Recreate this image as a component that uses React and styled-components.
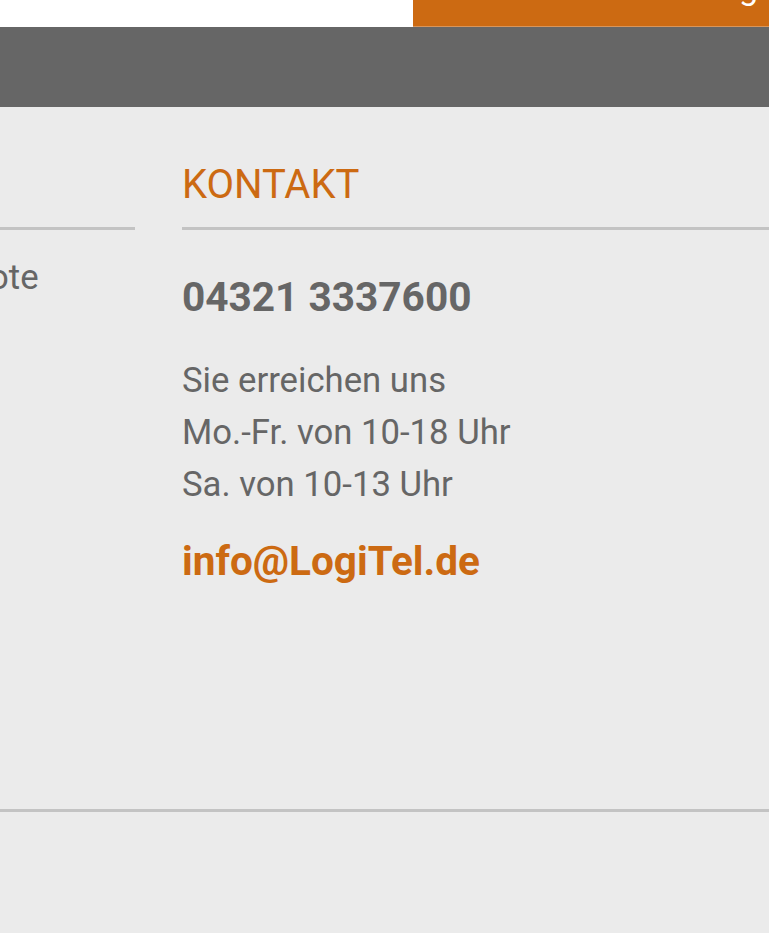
import React from 'react';
import styled, { createGlobalStyle } from 'styled-components';

const GlobalStyle = createGlobalStyle`
	html, body {
		margin: 0;
		padding: 0;
		background: #ebebeb;
		font-family: Roboto, "Liberation Sans", Arial, sans-serif;
		overflow: hidden;
	}
`;

const orange = '#cc6a12';
const grey = '#666666';

const TopBar = styled.div`
	height: 27px;
	background: #ffffff;
	display: flex;
	justify-content: flex-end;
`;

const CtaButton = styled.a`
	box-sizing: border-box;
	width: 356px;
	height: 27px;
	padding: 0 11px 22px 0;
	background: ${orange};
	border-bottom: 1px solid #d9955a;
	color: #ffffff;
	font-size: 34px;
	line-height: 34px;
	display: flex;
	justify-content: flex-end;
	align-items: flex-end;
	overflow: hidden;
	text-decoration: none;
`;

const NavBar = styled.nav`
	height: 80px;
	background: ${grey};
`;

const Main = styled.main`
	padding: 53px 0 224px;
	border-bottom: 3px solid #c3c3c3;
	overflow: hidden;
`;

const Columns = styled.div`
	display: grid;
	grid-template-columns: 378px 1fr;
	column-gap: 47px;
	margin-left: -243px;
`;

const Column = styled.section`
	display: flex;
	flex-direction: column;
`;

const Heading = styled.h2`
	margin: 0;
	padding-bottom: 17px;
	border-bottom: 3px solid #c3c3c3;
	font-size: 40px;
	line-height: 50px;
	font-weight: 400;
	color: ${orange};
	white-space: nowrap;
`;

const LinkList = styled.ul`
	list-style: none;
	margin: 21px 0 0;
	padding: 0;
	& > li {
		font-size: 34.7px;
		line-height: 52px;
		color: ${grey};
		white-space: nowrap;
	}
`;

const Phone = styled.div`
	margin-top: 42px;
	font-size: 40.6px;
	line-height: 50px;
	font-weight: 700;
	color: ${grey};
`;

const Hours = styled.p`
	margin: 32px 0 0;
	font-size: 34.7px;
	line-height: 52px;
	color: ${grey};
`;

const Mail = styled.a`
	margin-top: 27px;
	font-size: 40.5px;
	line-height: 48px;
	font-weight: 700;
	color: ${orange};
	text-decoration: none;
`;

const Footer = styled.footer`
	height: 130px;
`;

export default function App() {
	return (
		<>
			<GlobalStyle />
			<TopBar>
				<CtaButton href="#">Beratung</CtaButton>
			</TopBar>
			<NavBar />
			<Main>
				<Columns>
					<Column>
						<Heading>SERVICE</Heading>
						<LinkList>
							<li>Aktuelle Angebote</li>
						</LinkList>
					</Column>
					<Column>
						<Heading>KONTAKT</Heading>
						<Phone>04321 3337600</Phone>
						<Hours>
							Sie erreichen uns<br />
							Mo.-Fr. von 10-18 Uhr<br />
							Sa. von 10-13 Uhr
						</Hours>
						<Mail href="#">info@LogiTel.de</Mail>
					</Column>
				</Columns>
			</Main>
			<Footer />
		</>
	);
}
